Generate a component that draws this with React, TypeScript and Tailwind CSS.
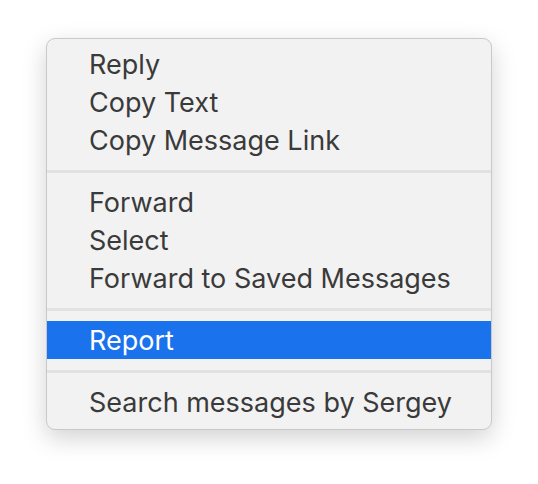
const groups: string[][] = [
  ["Reply", "Copy Text", "Copy Message Link"],
  ["Forward", "Select", "Forward to Saved Messages"],
  ["Report"],
  ["Search messages by Sergey"],
];

const active = "Report";

function Item({ label }: { label: string }) {
  const isActive = label === active;
  return (
    <div
      className={
        "flex h-[38px] items-center pl-[42px] " +
        (isActive ? "bg-[#1a73ec] text-white" : "text-[#3a3a3a]")
      }
    >
      {label}
    </div>
  );
}

export default function App() {
  return (
    <div className="flex h-[484px] w-[538px] items-start bg-white pl-[46px] pt-[38px]">
      <div
        className="flex w-[446px] flex-col rounded-[9px] border border-[#c9c9c9] bg-[#f2f2f2] pb-[8px] pt-[6px] text-[27px] leading-none shadow-[0_8px_24px_rgba(0,0,0,0.18)]"
        style={{ fontFamily: "Inter, 'Liberation Sans', sans-serif" }}
      >
        {groups.map((group, i) => (
          <div key={i} className="flex flex-col">
            {i > 0 && <div className="mb-[10px] mt-[11px] h-[3px] bg-[#e2e2e2]" />}
            {group.map((label) => (
              <Item key={label} label={label} />
            ))}
          </div>
        ))}
      </div>
    </div>
  );
}
